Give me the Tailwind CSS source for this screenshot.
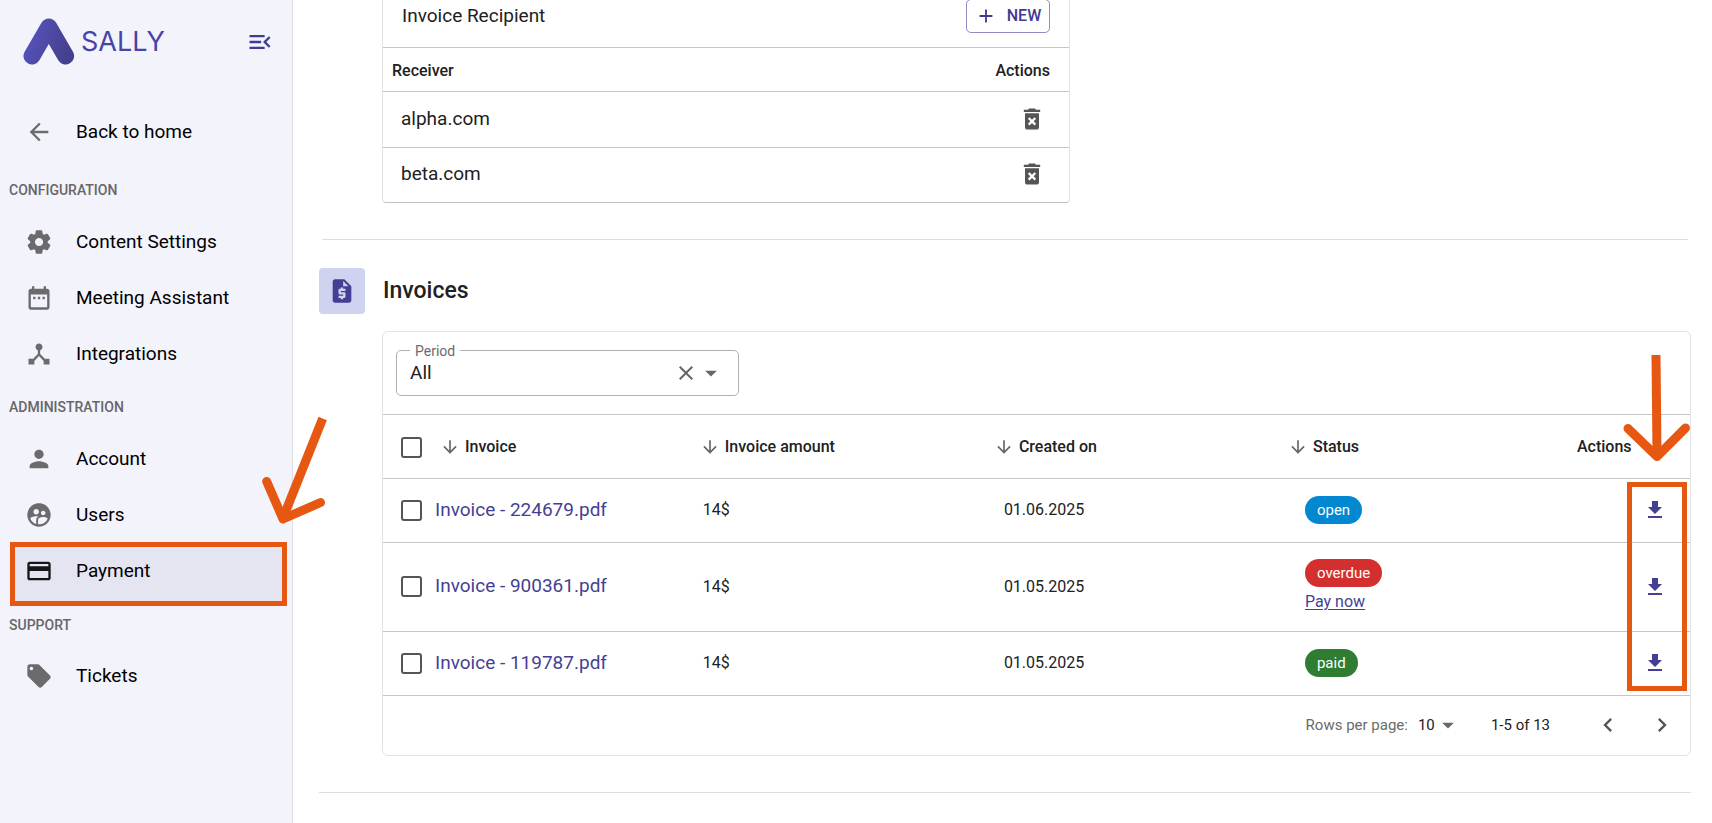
<!DOCTYPE html>
<html lang="en">
<head>
    <meta charset="UTF-8">
    <meta name="viewport" content="width=device-width, initial-scale=1.0">
    <title>Sally - Payment</title>

    <!-- Tailwind CSS -->
    <script src="https://cdn.jsdelivr.net/npm/@tailwindcss/browser@4"></script>
</head>
<body class="bg-white font-[Roboto,sans-serif] text-[#212121] overflow-x-hidden">
    <!-- Icons -->
    <svg class="hidden">
        <symbol id="menu-open" viewBox="0 0 24 24"><path d="M3 18h13v-2H3v2zM3 6v2h13V6H3zm0 7h10v-2H3v2zm18 2.59L17.42 12 21 8.41 19.59 7l-5 5 5 5L21 15.59z"/></symbol>
        <symbol id="back" viewBox="0 0 24 24"><path d="M20 11H7.83l5.59-5.59L12 4l-8 8 8 8 1.41-1.41L7.83 13H20v-2z"/></symbol>
        <symbol id="settings" viewBox="0 0 24 24"><path d="M19.5 12c0-.23-.01-.45-.03-.68l1.860-1.410c.4-.3.510-.860.260-1.300l-1.870-3.230c-.25-.44-.790-.620-1.250-.420l-2.150.910c-.370-.260-.760-.490-1.170-.680l-.290-2.310c-.060-.500-.490-.880-.990-.880h-3.730c-.510 0-.940.380-1 .880l-.290 2.310c-.410.190-.800.420-1.170.680l-2.150-.910c-.460-.200-1-.020-1.250.420L2.410 8.620c-.250.440-.140.990.260 1.300l1.860 1.410C4.510 11.550 4.500 11.770 4.500 12s.010.450.030.680l-1.860 1.410c-.400.300-.510.860-.260 1.300l1.870 3.230c.250.440.790.620 1.250.420l2.150-.910c.370.260.760.490 1.170.680l.290 2.310c.060.500.490.880.990.880h3.730c.500 0 .930-.380.990-.880l.290-2.310c.410-.190.800-.420 1.170-.680l2.150.910c.460.200 1 .020 1.250-.420l1.870-3.230c.250-.440.140-.990-.260-1.300l-1.860-1.410c.030-.230.040-.450.040-.680zm-7.460 3.500c-1.930 0-3.500-1.570-3.500-3.500s1.570-3.500 3.500-3.500 3.500 1.570 3.500 3.500-1.570 3.500-3.500 3.500z"/></symbol>
        <symbol id="calendar" viewBox="0 0 24 24"><path d="M9 11H7v2h2v-2zm4 0h-2v2h2v-2zm4 0h-2v2h2v-2zm2-7h-1V2h-2v2H8V2H6v2H5c-1.11 0-1.99.9-1.99 2L3 20c0 1.1.89 2 2 2h14c1.1 0 2-.9 2-2V6c0-1.1-.9-2-2-2zm0 16H5V9h14v11z"/></symbol>
        <symbol id="hub" viewBox="0 0 24 24"><path d="M17 16l-4-4V8.82C14.16 8.4 15 7.3 15 6c0-1.66-1.34-3-3-3S9 4.34 9 6c0 1.3.84 2.4 2 2.82V12l-4 4H3v5h5v-3.05l4-4.2 4 4.2V21h5v-5h-4z"/></symbol>
        <symbol id="person" viewBox="0 0 24 24"><path d="M12 12c2.21 0 4-1.79 4-4s-1.79-4-4-4-4 1.79-4 4 1.79 4 4 4zm0 2c-2.67 0-8 1.34-8 4v2h16v-2c0-2.66-5.33-4-8-4z"/></symbol>
        <symbol id="users" viewBox="0 0 24 24"><path d="M11.99 2c-5.52 0-10 4.48-10 10s4.48 10 10 10 10-4.48 10-10-4.48-10-10-10zm3.61 6.34c1.07 0 1.93.86 1.93 1.93 0 1.07-.86 1.93-1.93 1.93-1.07 0-1.93-.86-1.93-1.93-.01-1.07.86-1.93 1.93-1.93zm-6-1.58c1.3 0 2.36 1.06 2.36 2.36 0 1.3-1.06 2.36-2.36 2.36s-2.36-1.06-2.36-2.36c0-1.31 1.05-2.36 2.36-2.36zm0 9.13v3.75c-2.4-.75-4.3-2.6-5.14-4.96 1.05-1.12 3.67-1.69 5.14-1.69.53 0 1.2.08 1.9.22-1.64.87-1.9 2.02-1.9 2.68zM11.99 20c-.27 0-.53-.01-.79-.04v-4.07c0-1.42 2.94-2.13 4.4-2.13 1.07 0 2.92.39 3.84 1.15-1.17 2.97-4.06 5.09-7.45 5.09z"/></symbol>
        <symbol id="card" viewBox="0 0 24 24"><path d="M20 4H4c-1.11 0-1.99.89-1.99 2L2 18c0 1.11.89 2 2 2h16c1.11 0 2-.89 2-2V6c0-1.11-.89-2-2-2zm0 14H4v-6h16v6zm0-10H4V6h16v2z"/></symbol>
        <symbol id="tag" viewBox="0 0 24 24"><path d="M21.41 11.58l-9-9C12.05 2.22 11.55 2 11 2H4c-1.1 0-2 .9-2 2v7c0 .55.22 1.05.59 1.42l9 9c.36.36.86.58 1.41.58.55 0 1.05-.22 1.41-.59l7-7c.37-.36.59-.86.59-1.41 0-.55-.23-1.06-.59-1.42zM5.5 7C4.67 7 4 6.33 4 5.5S4.67 4 5.5 4 7 4.67 7 5.5 6.33 7 5.5 7z"/></symbol>
        <symbol id="plus" viewBox="0 0 24 24"><path d="M19 13h-6v6h-2v-6H5v-2h6V5h2v6h6v2z"/></symbol>
        <symbol id="trash" viewBox="0 0 24 24"><path d="M6 19c0 1.1.9 2 2 2h8c1.1 0 2-.9 2-2V7H6v12zm2.46-7.12l1.41-1.41L12 12.59l2.12-2.12 1.41 1.41L13.41 14l2.12 2.12-1.41 1.41L12 15.41l-2.12 2.12-1.41-1.41L10.59 14l-2.13-2.12zM15.5 4l-1-1h-5l-1 1H5v2h14V4z"/></symbol>
        <symbol id="quote" viewBox="0 0 24 24"><path d="M14 2H6c-1.1 0-1.99.9-1.99 2L4 20c0 1.1.89 2 1.99 2H18c1.1 0 2-.9 2-2V8l-6-6zm1 10h-4v1h3c.55 0 1 .45 1 1v3c0 .55-.45 1-1 1h-1v1h-2v-1H9v-2h4v-1h-3c-.55 0-1-.45-1-1v-3c0-.55.45-1 1-1h1V9h2v1h2v2zm-2-4V3.5L17.5 8H13z"/></symbol>
        <symbol id="close" viewBox="0 0 24 24"><path d="M19 6.41L17.59 5 12 10.59 6.41 5 5 6.41 10.59 12 5 17.59 6.41 19 12 13.41 17.59 19 19 17.59 13.41 12z"/></symbol>
        <symbol id="caret" viewBox="0 0 24 24"><path d="M7 10l5 5 5-5z"/></symbol>
        <symbol id="sort" viewBox="0 0 24 24"><path d="M20 12l-1.41-1.41L13 16.17V4h-2v12.17l-5.58-5.59L4 12l8 8 8-8z"/></symbol>
        <symbol id="download" viewBox="0 0 24 24"><path d="M5 20h14v-2H5v2zM19 9h-4V3H9v6H5l7 7 7-7z"/></symbol>
        <symbol id="prev" viewBox="0 0 24 24"><path d="M15.41 7.41L14 6l-6 6 6 6 1.41-1.41L10.83 12z"/></symbol>
        <symbol id="next" viewBox="0 0 24 24"><path d="M10 6L8.59 7.41 13.17 12l-4.58 4.59L10 18l6-6z"/></symbol>
    </svg>

    <div class="flex min-h-screen">
        <!-- Sidebar -->
        <aside class="w-[293px] shrink-0 bg-[#f3f3fc] border-r border-[#e0e0e4]">
            <div class="flex items-center h-[104px] pl-[23px] pr-[18px] pb-[21px]">
                <svg class="w-[52px] h-[47px]" viewBox="0 0 52 47" fill="none">
                    <defs>
                        <linearGradient id="logo" x1="0" y1="0" x2="52" y2="20" gradientUnits="userSpaceOnUse">
                            <stop offset=".3" stop-color="#5250b4"/>
                            <stop offset="1" stop-color="#453f8c"/>
                        </linearGradient>
                    </defs>
                    <path d="M9 38 25.8 9 42.6 38" stroke="url(#logo)" stroke-width="17" stroke-linecap="round" stroke-linejoin="round"/>
                </svg>
                <span class="ml-[6px] font-[Inter,sans-serif] text-[27px] leading-none text-[#4644a8]">SALLY</span>
                <button class="ml-auto text-[#3f3a94]" aria-label="Collapse menu">
                    <svg class="size-7 fill-current"><use href="#menu-open"/></svg>
                </button>
            </div>

            <!-- Navigation -->
            <nav class="text-[19px] text-black">
                <a href="#home" class="flex items-center h-14 pl-[25px] mb-[5px]">
                    <svg class="size-7 mr-[23px] fill-[#6b6b6e]"><use href="#back"/></svg>Back to home
                </a>

                <h2 class="flex items-center h-[49px] pl-[9px] text-sm font-medium text-[#666668]">CONFIGURATION</h2>
                <ul>
                    <li><a href="#content" class="flex items-center h-14 pl-[25px]"><svg class="size-7 mr-[23px] fill-[#6b6b6e]"><use href="#settings"/></svg>Content Settings</a></li>
                    <li><a href="#meeting" class="flex items-center h-14 pl-[25px]"><svg class="size-7 mr-[23px] fill-[#6b6b6e]"><use href="#calendar"/></svg>Meeting Assistant</a></li>
                    <li><a href="#integrations" class="flex items-center h-14 pl-[25px]"><svg class="size-7 mr-[23px] fill-[#6b6b6e]"><use href="#hub"/></svg>Integrations</a></li>
                </ul>

                <h2 class="flex items-center h-[49px] pl-[9px] text-sm font-medium text-[#666668]">ADMINISTRATION</h2>
                <ul>
                    <li><a href="#account" class="flex items-center h-14 pl-[25px]"><svg class="size-7 mr-[23px] fill-[#6b6b6e]"><use href="#person"/></svg>Account</a></li>
                    <li><a href="#users" class="flex items-center h-14 pl-[25px]"><svg class="size-7 mr-[23px] fill-[#6b6b6e]"><use href="#users"/></svg>Users</a></li>
                    <li class="relative">
                        <a href="#payment" class="flex items-center h-14 pl-[25px]"><svg class="size-7 mr-[23px] fill-[#151517] z-10"><use href="#card"/></svg><span class="z-10">Payment</span></a>
                        <!-- Highlight -->
                        <div class="absolute left-[10px] right-[5px] -top-px -bottom-[7px] bg-[#e5e5f1] border-5 border-[#e65811]"></div>
                        <svg class="absolute left-[255px] -top-[133px] w-[80px] h-[120px] z-10" viewBox="255 410 80 120" fill="none" stroke="#e65811" stroke-width="9" stroke-linejoin="round">
                            <path d="M322.7 418.5 283 518"/>
                            <path d="M266.7 481.5 283 519 320.5 502.5" stroke-linecap="round"/>
                        </svg>
                    </li>
                </ul>

                <h2 class="flex items-center h-[49px] pl-[9px] text-sm font-medium text-[#666668]"><span class="pt-[2px]">SUPPORT</span></h2>
                <ul>
                    <li><a href="#tickets" class="flex items-center h-14 pl-[25px]"><svg class="size-7 mr-[23px] fill-[#6b6b6e]"><use href="#tag"/></svg>Tickets</a></li>
                </ul>
            </nav>
        </aside>

        <!-- Main Content -->
        <main class="flex-1 min-w-0 pl-[26px] pr-[21px]">
            <!-- Invoice recipients -->
            <section class="ml-[63px] w-[688px] border border-t-0 border-[#e2e2e2] border-b-[#c2c2c2] rounded-b">
                <div class="flex items-center justify-between h-12 px-[19px] pb-[15px] border-b border-[#c6c6c6]">
                    <h3 class="text-[19px]">Invoice Recipient</h3>
                    <button class="flex items-center justify-center gap-[10px] w-[84px] h-[34px] border border-[#8f8cc8] rounded-[5px] text-base font-medium text-[#3f3a94]">
                        <svg class="size-[22px] fill-current"><use href="#plus"/></svg>NEW
                    </button>
                </div>
                <table class="w-full">
                    <thead>
                        <tr class="h-[43px] border-b border-[#c6c6c6] text-base">
                            <th class="pt-[3px] pl-[9px] text-left font-medium">Receiver</th>
                            <th class="pt-[3px] pr-[19px] text-right font-medium">Actions</th>
                        </tr>
                    </thead>
                    <tbody class="text-[19px]">
                        <tr class="h-14 border-b border-[#c6c6c6]">
                            <td class="pl-[18px]">alpha.com</td>
                            <td class="pr-[23px]"><button class="block ml-auto" aria-label="Delete alpha.com"><svg class="size-7 fill-[#555]"><use href="#trash"/></svg></button></td>
                        </tr>
                        <tr class="h-[55px]">
                            <td class="pl-[18px] pb-[2px]">beta.com</td>
                            <td class="pr-[23px] pb-[2px]"><button class="block ml-auto" aria-label="Delete beta.com"><svg class="size-7 fill-[#555]"><use href="#trash"/></svg></button></td>
                        </tr>
                    </tbody>
                </table>
            </section>

            <hr class="mt-9 mx-[3px] border-[#dedede]">

            <!-- Invoices -->
            <div class="flex items-center mt-7">
                <div class="flex items-center justify-center size-[46px] rounded bg-[#cfd3f0]">
                    <svg class="size-7 fill-[#453f94]"><use href="#quote"/></svg>
                </div>
                <h2 class="ml-[18px] text-[23px] leading-8 font-medium">Invoices</h2>
            </div>

            <section class="relative mt-[17px] ml-[63px] border border-[#e2e2e2] rounded-md">
                <div class="px-[13px] py-[18px] border-b border-[#c6c6c6]">
                    <div class="relative flex items-center w-[343px] h-[46px] border border-[#b0b0b0] rounded-[5px]">
                        <label for="period" class="absolute left-[13px] -top-[10px] px-[5px] bg-white text-sm leading-5 text-[#6b6b6b]">Period</label>
                        <select id="period" class="appearance-none w-full h-full pl-[13px] text-[19px] outline-none">
                            <option>All</option>
                        </select>
                        <button class="absolute right-[40px]" aria-label="Clear period"><svg class="size-6 fill-[#666]"><use href="#close"/></svg></button>
                        <svg class="absolute right-[13px] size-7 fill-[#666] pointer-events-none"><use href="#caret"/></svg>
                    </div>
                </div>

                <table class="w-full table-fixed text-base">
                    <colgroup>
                        <col class="w-[46px]">
                        <col>
                        <col class="w-[22.5%]">
                        <col class="w-[22.5%]">
                        <col class="w-[22.5%]">
                        <col class="w-[121px]">
                    </colgroup>
                    <thead>
                        <tr class="h-[63px] border-b border-[#c6c6c6] text-left">
                            <th class="pl-[18px] pt-[2px]"><input type="checkbox" aria-label="Select all invoices" class="block appearance-none size-[21px] border-2 border-[#555] rounded-[3px]"></th>
                            <th class="pl-[11px] pt-[2px] font-medium"><button class="flex items-center gap-[5px]"><svg class="size-5 fill-[#666]"><use href="#sort"/></svg>Invoice</button></th>
                            <th class="pl-[13px] pt-[2px] font-medium"><button class="flex items-center gap-[5px]"><svg class="size-5 fill-[#666]"><use href="#sort"/></svg>Invoice amount</button></th>
                            <th class="pl-[13px] pt-[2px] font-medium"><button class="flex items-center gap-[5px]"><svg class="size-5 fill-[#666]"><use href="#sort"/></svg>Created on</button></th>
                            <th class="pl-[13px] pt-[2px] font-medium"><button class="flex items-center gap-[5px]"><svg class="size-5 fill-[#666]"><use href="#sort"/></svg>Status</button></th>
                            <th class="pl-2 pt-[2px] font-medium">Actions</th>
                        </tr>
                    </thead>
                    <tbody>
                        <tr class="h-16 border-b border-[#c6c6c6]">
                            <td class="pl-[18px]"><input type="checkbox" aria-label="Select invoice 224679" class="block appearance-none size-[21px] border-2 border-[#555] rounded-[3px]"></td>
                            <td class="pl-[6px] text-[19px]"><a href="#224679" class="text-[#453f94]">Invoice - 224679.pdf</a></td>
                            <td class="pl-4">14$</td>
                            <td class="pl-[23px]">01.06.2025</td>
                            <td class="pl-[30px]"><span class="inline-flex items-center h-7 px-3 rounded-full bg-[#0288d1] text-white text-[15px]">open</span></td>
                            <td class="pr-[23px]"><button class="block ml-auto" aria-label="Download invoice 224679"><svg class="size-6 fill-[#453f94]"><use href="#download"/></svg></button></td>
                        </tr>
                        <tr class="h-[89px] border-b border-[#c6c6c6]">
                            <td class="pl-[18px]"><input type="checkbox" aria-label="Select invoice 900361" class="block appearance-none size-[21px] border-2 border-[#555] rounded-[3px]"></td>
                            <td class="pl-[6px] text-[19px]"><a href="#900361" class="text-[#453f94]">Invoice - 900361.pdf</a></td>
                            <td class="pl-4">14$</td>
                            <td class="pl-[23px]">01.05.2025</td>
                            <td class="pl-[30px]">
                                <div class="flex flex-col items-start gap-[3px]">
                                    <span class="inline-flex items-center h-7 px-3 rounded-full bg-[#d32f2f] text-white text-[15px]">overdue</span>
                                    <a href="#pay" class="text-[#453f94] underline underline-offset-2">Pay now</a>
                                </div>
                            </td>
                            <td class="pr-[23px]"><button class="block ml-auto" aria-label="Download invoice 900361"><svg class="size-6 fill-[#453f94]"><use href="#download"/></svg></button></td>
                        </tr>
                        <tr class="h-16 border-b border-[#c6c6c6]">
                            <td class="pl-[18px]"><input type="checkbox" aria-label="Select invoice 119787" class="block appearance-none size-[21px] border-2 border-[#555] rounded-[3px]"></td>
                            <td class="pl-[6px] text-[19px]"><a href="#119787" class="text-[#453f94]">Invoice - 119787.pdf</a></td>
                            <td class="pl-4">14$</td>
                            <td class="pl-[23px]">01.05.2025</td>
                            <td class="pl-[30px]"><span class="inline-flex items-center h-7 px-3 rounded-full bg-[#2e7d32] text-white text-[15px]">paid</span></td>
                            <td class="pr-[23px]"><button class="block ml-auto" aria-label="Download invoice 119787"><svg class="size-6 fill-[#453f94]"><use href="#download"/></svg></button></td>
                        </tr>
                    </tbody>
                </table>

                <!-- Pagination -->
                <div class="flex items-center justify-end h-[59px] pr-[14px] text-[15px]">
                    <label for="rows" class="text-[#6b6b6b]">Rows per page:</label>
                    <div class="relative flex items-center ml-[10px] mr-[29px]">
                        <select id="rows" class="appearance-none w-[44px] outline-none">
                            <option>10</option>
                        </select>
                        <svg class="absolute right-0 size-7 fill-[#666] pointer-events-none"><use href="#caret"/></svg>
                    </div>
                    <span>1-5 of 13</span>
                    <button class="ml-[44px]" aria-label="Previous page"><svg class="size-7 fill-[#555]"><use href="#prev"/></svg></button>
                    <button class="ml-[26px]" aria-label="Next page"><svg class="size-7 fill-[#555]"><use href="#next"/></svg></button>
                </div>

                <!-- Highlight -->
                <svg class="absolute right-0 top-[18px] w-[70px] h-[115px]" viewBox="1620 350 70 115" fill="none" stroke="#e65811" stroke-width="9" stroke-linejoin="round">
                    <path d="M1656 355 1657 454"/>
                    <path d="M1628 428.5 1657 456.500 1685.5 428" stroke-linecap="round"/>
                </svg>
                <div class="absolute right-[3px] top-[150px] w-[60px] h-[209px] border-5 border-[#e65811]"></div>
            </section>

            <hr class="mt-9 border-[#dedede]">
        </main>
    </div>
</body>
</html>
